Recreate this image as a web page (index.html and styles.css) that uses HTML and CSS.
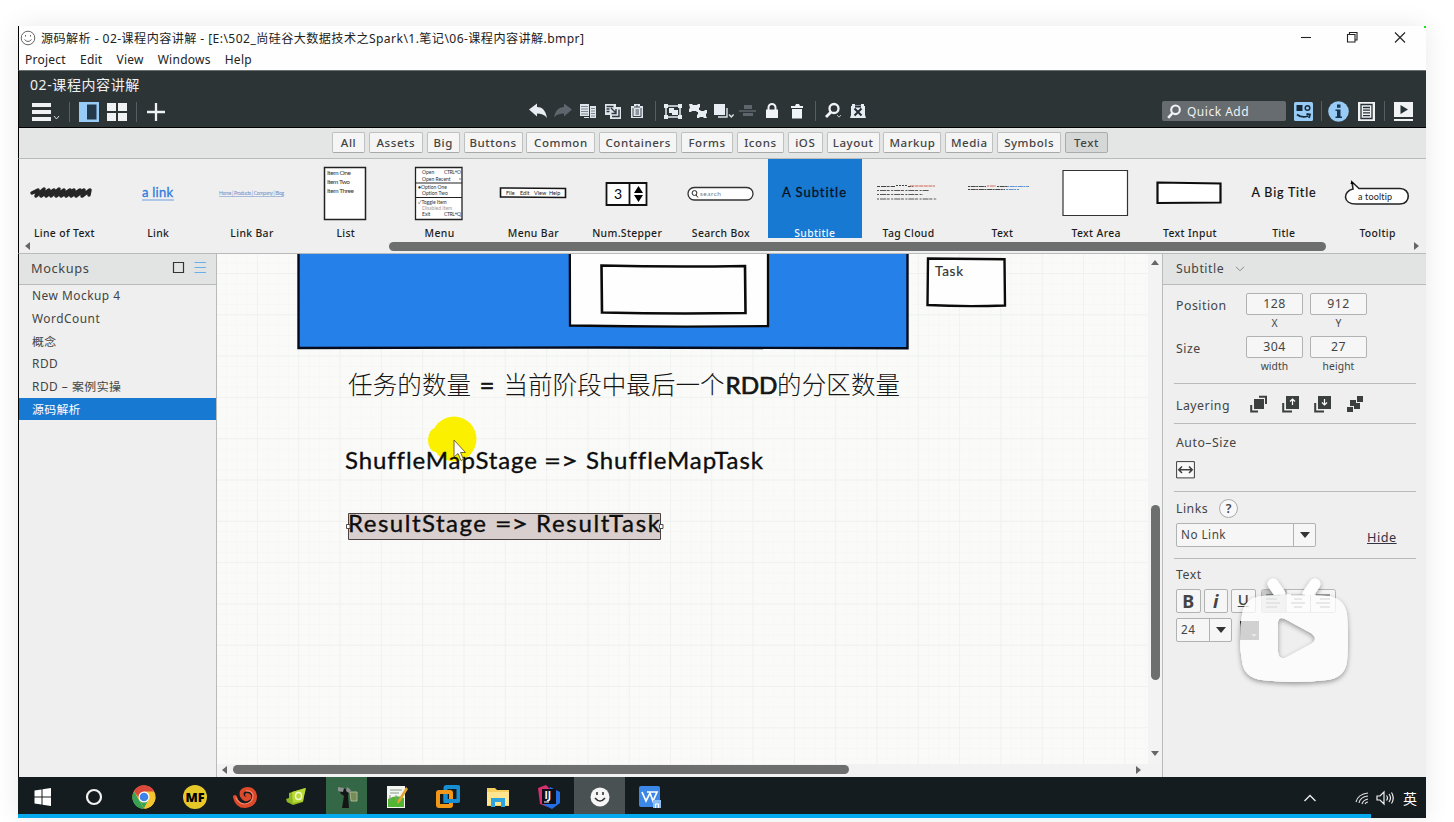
FILE: index.html
```html
<!DOCTYPE html>
<html lang="zh-CN">
<head>
<meta charset="utf-8">
<title>源码解析</title>
<link rel="stylesheet" href="styles.css">
</head>
<body>
<div class="window">
  <header class="titlebar">
    <svg class="app-icon" width="16" height="16" viewBox="0 0 16 16" fill="none" stroke="#666" stroke-width="1"><circle cx="8" cy="8" r="6.800"/><path d="M4.500 9.500q3.500 4 7 0M5.500 5v1.600M10.500 5v1.600"/></svg>
    <span class="caption">源码解析 - 02-课程内容讲解 - [E:\502_尚硅谷大数据技术之Spark\1.笔记\06-课程内容讲解.bmpr]</span>
    <svg class="win-controls" width="108" height="14" viewBox="0 0 108 14" fill="none" stroke="#222" stroke-width="1.100"><path d="M2 7.500h10"/><path d="M48.500 4.500h7.500v7.500h-7.500zM50.500 4.500v-2h7.500v7.500h-2"/><path d="M96 2.500l10 10M106 2.500l-10 10"/></svg>
    <i class="corner"></i>
  </header>
  <nav class="menubar"><span>Project</span><span>Edit</span><span>View</span><span>Windows</span><span>Help</span></nav>

  <section class="toolbar">
    <div class="doc-name">02-课程内容讲解</div>
    <div class="tools">
      <div class="tools-left">
        <svg width="30" height="20" viewBox="0 0 30 20"><path fill="#f0f2f4" d="M0 1h19v4H0zM0 8h19v4H0zM0 15h19v4H0z"/><path d="M22 14l2.500 3 2.500-3" fill="none" stroke="#d8dcdf"/></svg>
        <i class="sep"></i>
        <svg width="20" height="20" viewBox="0 0 20 20"><path fill="#98cbf5" d="M0 0h20v20H0z"/><path fill="#243949" d="M8 2.500h9.500v15H8z"/></svg>
        <svg width="20" height="20" viewBox="0 0 20 20"><path fill="#f0f2f4" d="M0 1h9v8H0zM11 1h9v8h-9zM0 11h9v8H0zM11 11h9v8h-9z"/></svg>
        <i class="sep"></i>
        <svg width="20" height="20" viewBox="0 0 20 20"><path d="M10 1v18M1 10h18" stroke="#f0f2f4" stroke-width="2.300"/></svg>
      </div>
      <div class="tools-mid">
        <svg viewBox="0 0 24 20"><path fill="#e8ecf3" d="M3 8.500L11 2.500v3.600c5 0 8.500 3 10 10.900C18.500 13.500 15 12.500 11 12.500v3z"/></svg>
        <svg viewBox="0 0 24 20"><path fill="#5d666c" d="M21 8.500L13 2.500v3.600C8 6.100 4.500 9.500 3 16.500c2.500-3 5.500-4 10-4v3z"/></svg>
        <svg viewBox="0 0 24 20"><g fill="#e1e6ed"><path d="M4 3h9v12H4zM14 5h6v12h-6zM8 16h5v1H8z"/></g><path d="M5 5.500h7M5 8h7M5 10.500h7M5 13h7M15 7.500h4M15 10h4M15 12.500h4M15 15h4" stroke="#7d868e"/></svg>
        <svg viewBox="0 0 24 20"><path fill="#e1e6ed" d="M4 3h11v3h5v12H9v-4H4z"/><path d="M5.500 5.500h7M5.500 8h3M5.500 10.500h3M18 8.500v7h-7M10 7l5 5M15 8v4.500h-4.500" fill="none" stroke="#313a42" stroke-width="1.400"/></svg>
        <svg viewBox="0 0 24 20"><path fill="#e1e6ed" d="M6 5h3V3h6v2h3v12H6z"/><path d="M8 7v8.500h8V7M9 6h6M10.500 9h3.500M10.500 11h3.500M10.500 13h3.500M12 4v2" fill="none" stroke="#3b444c"/></svg>
        <i class="sep"></i>
        <svg viewBox="0 0 24 20"><path d="M5 5h14v11H5z" fill="none" stroke="#e8ecf3" stroke-width="1.500"/><path fill="#e8ecf3" d="M3 3h4v4H3zM17 3h4v4h-4zM3 14h4v4H3zM17 14h4v4h-4zM8 7h5v5H8zM11 9h6v5h-6z"/></svg>
        <svg viewBox="0 0 24 20"><path fill="#e8ecf3" d="M3 3h3l1 1h4l1-1h2v3l-1 1v2l1 2h-3l-1-1H6l-1 1H3V8l1-1zM12 9h2l1 1h3l1-1h2v3l-1 1v2l1 2h-3l-1-1h-3l-1 1h-2v-3l1-1v-2z"/></svg>
        <svg viewBox="0 0 24 20"><path fill="#e8ecf3" d="M3 3h11v11H3z"/><path d="M7 16h9V7M18 13.500l2.300 2.500 2.300-2.500" fill="none" stroke="#dfe4e9" stroke-width="1.400"/></svg>
        <svg viewBox="0 0 24 20"><path fill="#5d666c" d="M8 4h8v4H8zM7 12h10v3H7z"/><path d="M3 10h17" stroke="#5d666c" stroke-width="1.500"/></svg>
        <svg viewBox="0 0 24 20"><path fill="#f0f3f7" d="M6 8.500h12v8.500H6z"/><path d="M8.500 10V6.500a3.500 3.500 0 0 1 7 0V10" fill="none" stroke="#f0f3f7" stroke-width="2"/></svg>
        <svg viewBox="0 0 24 20"><path fill="#f0f3f7" d="M6 5h4l1-2h3l1 2h3v2H6zM7 8h10v9.500H7z"/></svg>
        <i class="sep"></i>
        <svg viewBox="0 0 24 20"><circle cx="13" cy="7.500" r="4.500" fill="none" stroke="#f0f3f7" stroke-width="2.300"/><path d="M10 11l-5 5" stroke="#f0f3f7" stroke-width="2.800"/><path d="M16 14l2 2.200 2-2.200" fill="none" stroke="#b9c0c5"/></svg>
        <svg viewBox="0 0 24 20"><path fill="#e8ecf3" d="M6 3h3v1h6V3h3v2h1v9l1 3H4l1-3V5h1z"/><path d="M8.500 7.500l7 7M15.500 7.500l-7 7M9 5.500h6" stroke="#242d33" stroke-width="2"/></svg>
      </div>
      <div class="tools-right">
        <div class="quick-add"><svg width="14" height="15" viewBox="0 0 14 15"><circle cx="8.500" cy="5.800" r="4.300" fill="none" stroke="#f0f2f4" stroke-width="2.100"/><path d="M5.500 9L1.200 13.800" stroke="#f0f2f4" stroke-width="2.600"/></svg><span>Quick Add</span></div>
        <svg width="19" height="19" viewBox="0 0 19 19"><rect width="19" height="19" rx="1.500" fill="#98cbf5"/><path fill="#16293a" d="M2.500 3h6v6h-6z"/><circle cx="13.500" cy="6" r="2.300" fill="none" stroke="#16293a" stroke-width="1.500"/><path d="M3 12.500q5 4 11 1.500M12.500 12l3.500.5-1 3.500" fill="none" stroke="#16293a" stroke-width="1.800"/></svg>
        <i class="sep"></i>
        <svg width="21" height="21" viewBox="0 0 21 21"><circle cx="10.500" cy="10.500" r="10.300" fill="#98cbf5"/><path fill="#173450" d="M9 3.500h3.500v3.200H9zM7.500 8.500h5v7H14V17H7.500v-1.500H9V10H7.500z"/></svg>
        <svg width="17" height="19" viewBox="0 0 17 19"><path fill="#f0f2f4" d="M0 0h17v19H0z"/><path d="M3 2.500h11v14H3zM5 5.500h7M5 8.200h7M5 10.900h7M5 13.600h7" fill="none" stroke="#273238" stroke-width="1.300"/></svg>
        <i class="sep"></i>
        <svg width="19" height="19" viewBox="0 0 19 19"><path fill="#f0f2f4" d="M0 0h19v15H0zM0 17h19v2H0z"/><path fill="#273238" d="M6.500 3l7.500 4.500-7.500 4.500z"/></svg>
      </div>
    </div>
  </section>

  <section class="filters">
    <b>All</b><b>Assets</b><b>Big</b><b>Buttons</b><b>Common</b><b>Containers</b><b>Forms</b><b>Icons</b><b>iOS</b><b>Layout</b><b>Markup</b><b>Media</b><b>Symbols</b><b class="on">Text</b>
  </section>

  <section class="library">
    <div class="shelf">
      <figure><svg viewBox="0 0 94 68"><path d="M14 34l6-3-2 6 8-7-3 7 8-6-3 6 8-6-3 6 8-7-3 7 8-6-3 6 9-6-4 6 8-6-3 6 9-6-4 6 8-6-2 6 8-6-1 5" fill="none" stroke="#262626" stroke-width="3.500" stroke-linejoin="round" stroke-linecap="round"/></svg><figcaption>Line of Text</figcaption></figure>
      <figure><svg viewBox="0 0 94 68"><text x="31" y="38" class="sk" font-size="13" fill="#2f7ae0" stroke="#2f7ae0" stroke-width=".3" textLength="31">a link</text><path d="M31 41h32" stroke="#6f9fdf"/></svg><figcaption>Link</figcaption></figure>
      <figure><svg viewBox="0 0 94 68"><text x="14" y="36" class="sk" font-size="5" fill="#6b8ecb" textLength="65" text-decoration="underline">Home | Products | Company | Blog</text></svg><figcaption>Link Bar</figcaption></figure>
      <figure><svg viewBox="0 0 94 68"><path d="M25.500 8.500h41v52h-41z" fill="#fff" stroke="#222" stroke-width="1.500"/><g class="sk" font-size="6.500" fill="#333"><text x="28" y="16" textLength="24">Item One</text><text x="28" y="25" textLength="23">Item Two</text><text x="28" y="33.500" textLength="27">Item Three</text></g></svg><figcaption>List</figcaption></figure>
      <figure><svg viewBox="0 0 94 68"><path d="M22.500 8.500h46.500v52H22.500z" fill="#fff" stroke="#222" stroke-width="1.300"/><path d="M23 24h46M23 38.500h46" stroke="#222"/><g class="sk" font-size="5" fill="#333"><text x="29" y="15">Open</text><text x="51" y="15" textLength="17">CTRL+O</text><text x="29" y="21.500">Open Recent</text><text x="65.500" y="21.500">&gt;</text><text x="25" y="29.500">●Option One</text><text x="29" y="36">Option Two</text><text x="25" y="44.500">✓Toggle Item</text><text x="29" y="51" fill="#999">Disabled Item</text><text x="29" y="57">Exit</text><text x="51" y="57" textLength="17">CTRL+Q</text></g></svg><figcaption>Menu</figcaption></figure>
      <figure><svg viewBox="0 0 94 68"><path d="M14.500 29l65 .5v9l-65-.5z" fill="#fff" stroke="#161616" stroke-width="1.600"/><g class="sk" font-size="5.500" fill="#222"><text x="20" y="36">File</text><text x="34" y="36">Edit</text><text x="48" y="36">View</text><text x="63" y="36">Help</text></g></svg><figcaption>Menu Bar</figcaption></figure>
      <figure><svg viewBox="0 0 94 68"><path d="M26.500 24h40v22h-40zM49.500 24v22" fill="#fff" stroke="#111" stroke-width="1.800"/><text x="34" y="39.500" class="sk" font-size="14">3</text><path d="M54 34l4.500-7 4.500 7zM54 36l4.500 7 4.500-7z"/></svg><figcaption>Num.Stepper</figcaption></figure>
      <figure><svg viewBox="0 0 94 68"><rect x="14" y="28.500" width="65" height="12.500" rx="6.200" fill="#fff" stroke="#333" stroke-width="1.300"/><circle cx="20.500" cy="34" r="2.400" fill="none" stroke="#222"/><path d="M22 36l2 2.500" stroke="#222"/><text x="26" y="37" class="sk" font-size="6.500" fill="#777" textLength="21">search</text></svg><figcaption>Search Box</figcaption></figure>
      <figure class="picked"><svg viewBox="0 0 94 68"><text x="14" y="37.500" class="sk" font-size="13" fill="#07121f" stroke="#07121f" stroke-width=".3" textLength="64">A Subtitle</text></svg><figcaption>Subtitle</figcaption></figure>
      <figure><svg viewBox="0 0 94 68" fill="none" stroke="#444" stroke-width="1.100"><path d="M15 27.500h18M46 27.500h5" stroke-dasharray="3 1 5 .6"/><path d="M34 26.500h11" stroke-dasharray="2 1"/><path d="M48 27h25" stroke="#d2604f" stroke-dasharray="4 .6"/><path d="M15 31.500h52M15 35.500h46M15 40h60" stroke-dasharray="2 1 6 .7 3 1.500" stroke-width=".9"/></svg><figcaption>Tag Cloud</figcaption></figure>
      <figure><svg viewBox="0 0 94 68" fill="none" stroke-width="1.100" stroke-dasharray="2 .7 5 .5"><path d="M13 27.500h18M42 27.500h10M13 30.500h37" stroke="#444"/><path d="M32 27h9" stroke="#cc6a60"/><path d="M52 27.500h22M51 30.500h13" stroke="#5e93d6"/></svg><figcaption>Text</figcaption></figure>
      <figure><svg viewBox="0 0 94 68"><path d="M14 11.500h64.500v45H14z" fill="#fff" stroke="#333" stroke-width="1.200"/></svg><figcaption>Text Area</figcaption></figure>
      <figure><svg viewBox="0 0 94 68"><path d="M14.500 23.500l63 1v19l-63 .5z" fill="#fff" stroke="#0c0c0c" stroke-width="2.200"/></svg><figcaption>Text Input</figcaption></figure>
      <figure><svg viewBox="0 0 94 68"><text x="14.500" y="37.500" class="sk" font-size="12.500" fill="#111" stroke="#111" stroke-width=".2" textLength="64">A Big Title</text></svg><figcaption>Title</figcaption></figure>
      <figure><svg viewBox="0 0 94 68"><path d="M28 29.500L21 23l1 7C12 32 11 45 25 45h44c11 0 11-15.500 0-15.500z" fill="#fff" stroke="#222" stroke-width="1.600"/><path d="M19.500 25l1-3 3 3z"/><text x="27" y="40.500" class="sk" font-size="9" fill="#222" textLength="34">a tooltip</text></svg><figcaption>Tooltip</figcaption></figure>
    </div>
    <div class="hscroll"><i class="tri left"></i><i class="thumb"></i><i class="tri right"></i></div>
  </section>

  <main class="workspace">
    <aside class="mockups">
      <div class="panel-head"><span>Mockups</span><svg width="36" height="16" viewBox="0 0 36 16" fill="none"><path d="M3.500 2.500h10v10h-10z" stroke="#333" stroke-width="1.200"/><path d="M24.500 2.500h11.500M24.500 7.500h11.500M24.500 12.500h11.500" stroke="#67b0ea" stroke-width="1.200"/></svg></div>
      <ul><li>New Mockup 4</li><li>WordCount</li><li class="zh">概念</li><li>RDD</li><li>RDD – 案例实操</li><li class="on zh">源码解析</li></ul>
    </aside>

    <section class="canvas">
      <svg class="board" width="931" height="510" viewBox="217 254 931 510">
        <defs>
          <pattern id="minor" width="10.325" height="10.325" patternUnits="userSpaceOnUse" x="257" y="273"><path d="M0 .5h10.330M.5 0v10.330" stroke="#f7f8f6" fill="none"/></pattern>
          <pattern id="major" width="41.300" height="41.300" patternUnits="userSpaceOnUse" x="257" y="273"><path d="M0 .5h41.300M.5 0v41.300" stroke="#f0f2f0" fill="none"/></pattern>
        </defs>
        <path d="M217 254h931v510H217z" fill="#fafbf9"/>
        <path d="M217 254h931v510H217z" fill="url(#minor)"/>
        <path d="M217 254h931v510H217z" fill="url(#major)"/>
        <path d="M298.500 240v108l300-.5 309 .8V240" fill="#2680ea" stroke="#050b1c" stroke-width="2.400"/>
        <path d="M569.800 240l.2 85.500q100 1.800 198 .5V240" fill="#fefefe" stroke="#090909" stroke-width="2.300"/>
        <path d="M601.500 265.500q70 1.800 143.500.5l.5 47q-73 1.200-143.500-.5z" fill="#fefefe" stroke="#0b0b0b" stroke-width="2.600"/>
        <path d="M928 258.500l76.500.8 .5 46.200q-40 1.500-77.500-.5z" fill="#fefefe" stroke="#0b0b0b" stroke-width="2.400"/>
        <text x="935" y="275.500" class="sk" font-size="13.500" fill="#333" stroke="#333" stroke-width=".2" textLength="28">Task</text>
        <g class="note" font-size="24.500" fill="#151515">
          <text x="348" y="394" textLength="123">任务的数量</text>
          <text x="479.500" y="395" class="sk" font-size="26" stroke="#151515" stroke-width=".5">=</text>
          <text x="503.500" y="394" textLength="221">当前阶段中最后一个</text>
          <text x="725.500" y="394" class="sk" font-size="24" textLength="52" lengthAdjust="spacingAndGlyphs" stroke="#151515" stroke-width=".7">RDD</text>
          <text x="777" y="394" textLength="123">的分区数量</text>
        </g>
        <circle cx="454" cy="439" r="22.500" fill="#fbf000"/>
        <ellipse cx="436" cy="440" rx="8" ry="12" fill="#fbf000"/>
        <path d="M348.500 513.500h312v26h-312z" fill="#d8cfce" stroke="#4a4341"/>
        <g class="sk" font-size="24" fill="#0d0d0d" stroke="#0d0d0d" stroke-width=".35">
          <text x="345" y="468.500" textLength="192">ShuffleMapStage</text>
          <text x="544" y="468.500" textLength="34" lengthAdjust="spacingAndGlyphs">=&gt;</text>
          <text x="586" y="468.500" textLength="177">ShuffleMapTask</text>
          <text x="348" y="532" textLength="138">ResultStage</text>
          <text x="495" y="532" textLength="33" lengthAdjust="spacingAndGlyphs">=&gt;</text>
          <text x="536" y="532" textLength="124">ResultTask</text>
        </g>
        <path d="M346.500 524.500h3.500v4h-3.500zM659.500 524.500h3.500v4h-3.500z" fill="#fff" stroke="#403a38" stroke-width=".9"/>
        <path d="M454 440v17l4-3.500 3 7 2.500-1.200-3-6.800h5z" fill="#fff" stroke="#6b5a18" stroke-width=".9"/>
      </svg>
      <div class="vscroll"><i class="tri up"></i><i class="thumb"></i><i class="tri down"></i></div>
      <div class="hscroll"><i class="tri left"></i><i class="thumb"></i><i class="tri right"></i></div>
    </section>

    <aside class="inspector">
      <div class="panel-head"><span>Subtitle</span><svg width="10" height="6" viewBox="0 0 10 6"><path d="M1 .8l4 4 4-4" fill="none" stroke="#888"/></svg></div>
      <div class="group metrics">
        <label>Position</label><div class="field">128<small>X</small></div><div class="field">912<small>Y</small></div>
        <label>Size</label><div class="field">304<small>width</small></div><div class="field">27<small>height</small></div>
      </div>
      <div class="group layering">
        <label>Layering</label>
        <svg viewBox="0 0 18 18" fill="#3b3f3d"><path d="M4 4h10v10H4z"/><path d="M9 1.800h7V9M1.200 10v6.500H8" fill="none" stroke="#3b3f3d" stroke-width="2"/></svg>
        <svg viewBox="0 0 18 18" fill="#3b3f3d"><path d="M4 1h13v13H4z"/><path d="M1.200 8v8.500H10" fill="none" stroke="#3b3f3d" stroke-width="2"/><path d="M10.500 10V4.500M8 6.500l2.500-2.500L13 6.500" fill="none" stroke="#fff" stroke-width="1.200"/></svg>
        <svg viewBox="0 0 18 18" fill="#3b3f3d"><path d="M4 1h13v13H4z"/><path d="M1.200 8v8.500H10" fill="none" stroke="#3b3f3d" stroke-width="2"/><path d="M10.500 4v5.500M8 7.500l2.500 2.500L13 7.500" fill="none" stroke="#fff" stroke-width="1.200"/></svg>
        <svg viewBox="0 0 18 18" fill="#3b3f3d"><path d="M11 1h6v6h-6zM4 5h6v3h4v6H8v-3H4zM1 12h6v5H1z"/></svg>
      </div>
      <div class="group autosize">
        <label>Auto–Size</label>
        <svg width="19" height="18" viewBox="0 0 19 18" fill="none" stroke="#3d3d3d"><path d="M.6.6h17.800v16.300H.6z" fill="#f8f9f8"/><path d="M3 8.700h13M6 5.500L2.800 8.700 6 12M13 5.500l3.200 3.200L13 12" stroke-width="1.500"/></svg>
      </div>
      <div class="group links">
        <label>Links <em>?</em></label>
        <div class="line"><div class="select wide"><span>No Link</span><i></i></div><a>Hide</a></div>
      </div>
      <div class="group typo">
        <label>Text</label>
        <div class="line styles"><b class="key">B</b><b class="key it">i</b><b class="key un">U</b>
          <svg width="75" height="24" viewBox="0 0 75 24" fill="none"><rect x=".5" y=".5" width="74" height="23" rx="2" fill="#f4f5f4" stroke="#b3b6b4"/><path d="M1 1h24v22H1z" fill="#c9cbca"/><path d="M25 1v22M49.500 1v22" stroke="#a3a6a4"/><path d="M5 6h14M5 10h11M5 14h14M5 18h11M30 6h14M33 10h8M30 14h14M33 18h8M55 6h14M59 10h10M55 14h14M59 18h10" stroke="#444"/></svg></div>
        <div class="line"><div class="select"><span>24</span><i></i></div><svg class="swatch" width="19" height="19" viewBox="0 0 19 19"><path fill="#333" d="M0 0h19v19H0z"/><path fill="#999" d="M11 13h6l-3 3z"/></svg></div>
      </div>
      <svg class="watermark" width="130" height="124" viewBox="0 0 130 124">
        <defs>
          <filter id="glow" x="-20%" y="-20%" width="140%" height="140%"><feDropShadow dx="0" dy="2" stdDeviation="2.500" flood-color="#000" flood-opacity=".38"/></filter>
          <path id="tv" clip-rule="evenodd" fill-rule="evenodd" d="M32 26q32-3 65 0 18 2 20 19 2 24 0 46-2 17-20 19-33 4-65 0Q14 108 12 91 8 69 12 45 14 28 32 26zM48 52v30q1 9 9 5l24-13q8-5 0-11L57 50q-8-5-9 2z"/>
          <mask id="outside"><path d="M0 0h130v124H0z" fill="#fff"/><use href="#tv" fill="#000"/></mask>
        </defs>
        <g mask="url(#outside)"><g filter="url(#glow)"><path d="M43 14l7 10M85 14l-7 10" stroke="#fefefe" stroke-width="11" stroke-linecap="round"/><use href="#tv" fill="#fefefe"/></g></g>
        <use href="#tv" fill="#fefefe" fill-opacity=".78"/>
      </svg>
    </aside>
  </main>

  <footer class="taskbar">
    <div class="apps">
      <span><svg viewBox="0 0 24 24" fill="#fff"><path d="M3.500 5.500l7-1v7h-7zM11.500 4.300L20 3v8.500h-8.500zM3.500 12.500h7v7l-7-1zM11.500 12.500H20V21l-8.500-1.300z"/></svg></span>
      <span><svg viewBox="0 0 24 24"><circle cx="12" cy="12" r="7" fill="none" stroke="#f1f1f1" stroke-width="2.200"/></svg></span>
      <span><svg viewBox="0 0 24 24"><circle cx="12" cy="12" r="11.500" fill="#f3c531"/><path d="M2 6.200l6 10.500 4 7A11.500 11.500 0 0 1 2 6.200z" fill="#37a155"/><path d="M8 16l4 7.500L17 14z" fill="#37a155"/><path d="M12 23.500L18 12h5.500A11.500 11.500 0 0 1 12 23.500z" fill="#f3c531"/><path d="M2 6.200A11.500 11.500 0 0 1 22.200 6.500H12L7 13z" fill="#dc493c"/><circle cx="12" cy="12" r="5.500" fill="#fff"/><circle cx="12" cy="12" r="4.300" fill="#3f82e8"/></svg></span>
      <span><svg viewBox="0 0 24 24"><circle cx="12" cy="12" r="12" fill="#e6c929"/><text x="2.500" y="17" font-size="13" font-weight="800" class="ui" textLength="19" lengthAdjust="spacingAndGlyphs">MF</text></svg></span>
      <span><svg viewBox="0 0 24 24" fill="none" stroke-linecap="round"><path d="M2 12q2 9 10 9 10-1 10-10-1-7-8-7-7 1-5 7 3 5 7 2 1-3-2-3" stroke="#dc4a2b" stroke-width="4"/><path d="M3 13q3 6 9 6 8-1 8-9-2-5-7-4" stroke="#ff8566" stroke-width="1.200"/></svg></span>
      <span><svg viewBox="0 0 24 24"><path d="M5 8l16-5-2 14-10 3-6-3-1-3 3-1z" fill="#8fb922"/><path d="M8 7l14-4-3 13-10 2z" fill="#b8d936"/><ellipse cx="14.500" cy="11" rx="3" ry="3.500" fill="none" stroke="#f0f8ce" stroke-width="1.500"/></svg></span>
      <span class="green"><svg viewBox="0 0 24 24"><path d="M8 3l6 3-1 5 1 12H7l2-12-4-3z" fill="#131615"/><path d="M3 2l6 1-1 4-5-1zM12 2l4 3-2 3-3-2z" fill="#8d918f"/><path d="M15 7h7v9h-6z" fill="#738c58" stroke="#a9b68c"/></svg></span>
      <span><svg viewBox="0 0 24 24"><path d="M2 1h18v22H2z" fill="#f4f6f0"/><path d="M3 14q8-5 16-1v9H3z" fill="#54b534"/><path d="M5 5h12M5 8h9M5 10v6M11 10v6" stroke="#899c91"/><path d="M21 2l-8 13-1 4 3-2 8-13z" fill="#e3a633"/></svg></span>
      <span><svg viewBox="0 0 24 24" fill="none" stroke-width="4"><rect x="9.500" y="2" width="13" height="14" rx="1" stroke="#168ed1"/><rect x="2" y="7" width="13" height="14" rx="1" stroke="#f39718"/><path d="M9.500 9v7h8" stroke="#168ed1"/></svg></span>
      <span><svg viewBox="0 0 24 24"><path d="M1 3h8l2 2h12v16H1z" fill="#f5cf60"/><path d="M1 7h22v13H1z" fill="#ffe590"/><path d="M5 13h14v9h-4v-5H9v5H5z" fill="#2da3df"/></svg></span>
      <span><svg viewBox="0 0 24 24"><path d="M1 3l8-3 6 6-4 16-8-3z" fill="#d72f70"/><path d="M13 2l10 5v11l-8 6-8-4z" fill="#246ee5"/><path d="M5 4h14v15H5z" fill="#101018"/><text x="7.500" y="13.500" class="ui" font-size="10" font-weight="700" fill="#fff">IJ</text><path d="M7 17h5" stroke="#fff"/></svg></span>
      <span class="active"><svg viewBox="0 0 24 24"><circle cx="12" cy="12" r="9.500" fill="#f5f5f5"/><path d="M7 13q5 6 10 0M9 7v3M15 7v3" fill="none" stroke="#333" stroke-width="1.600"/></svg></span>
      <span><svg viewBox="0 0 24 24"><rect x="1" y="1" width="21" height="21" rx="2" fill="#3c88e8"/><path d="M4 7l4 9 4-8 3 8 4-9H9" fill="none" stroke="#fff" stroke-width="1.700"/><path d="M15 15h8v8h-8z" fill="#8ebef6"/><path d="M17.500 23v-4h3v4" fill="none" stroke="#fff"/></svg></span>
    </div>
    <div class="tray">
      <svg width="14" height="10" viewBox="0 0 14 10"><path d="M1.500 8L7 2.500 12.500 8" fill="none" stroke="#eee" stroke-width="1.300"/></svg>
      <svg width="16" height="16" viewBox="0 0 16 16" fill="none" stroke="#ddd" stroke-width="1.200"><path d="M2 12Q4 4 14 3M5 13q1-6 9-7M8 14q1-4 6-5M11 14q1-2 3-2"/></svg>
      <svg width="18" height="16" viewBox="0 0 18 16" fill="none" stroke="#eee" stroke-width="1.200"><path d="M1 6h3l4-4v12l-4-4H1zM10.500 5.500q2 2.500 0 5M13 4q3 4 0 8M15.500 2.500q3.500 5.500 0 11"/></svg>
      <span>英</span>
    </div>
  </footer>
  <div class="progress"><i></i></div>
</div>
</body>
</html>
```
FILE: styles.css
```css
* { box-sizing: border-box; }
body { margin: 0; width: 1454px; height: 822px; overflow: hidden; padding: 26px 28px 4px 18px; background: #fff; font-family: "Noto Sans", "Noto Sans CJK SC", sans-serif; font-size: 12px; color: #444; }
svg { display: block; flex: none; }
i { font-style: normal; }
.sk { font-family: Lato, "Noto Sans CJK SC", sans-serif; font-weight: 400; font-variant-ligatures: none; }
.ui { font-family: "Open Sans", sans-serif; }
.note { font-family: "Noto Sans CJK SC", sans-serif; font-weight: 300; }
.window { width: 1408px; height: 792px; display: flex; flex-direction: column; background: #fefefe; box-shadow: 0 0 24px rgba(0,0,0,.09); }

.titlebar { height: 23px; display: flex; align-items: center; padding-left: 1px; color: #222; border-left: 1px solid #000; }
.caption { margin: 2px 0 0 5px; font-size: 12.100px; line-height: 22px; letter-spacing: .43px; white-space: pre; }
.win-controls { margin: -2px 17px 0 auto; }
.corner { width: 2px; height: 2px; background: #1de01d; align-self: flex-start; }
.menubar { height: 21px; display: flex; gap: 14px; padding-left: 6px; line-height: 22px; letter-spacing: .25px; color: #222; border-left: 1px solid #000; }

.toolbar { height: 58px; background: #2d3436; border-top: 1px solid #687070; border-bottom: 1px solid #000; border-left: 1px solid #000; }
.doc-name { height: 28px; padding-left: 11px; line-height: 28px; font-size: 14px; letter-spacing: .6px; color: #f0f0f0; }
.tools { display: grid; grid-template-columns: 507.200px 1fr 264px; height: 25px; align-items: center; }
.tools-left { display: flex; align-items: center; padding-left: 13px; }
.tools-left svg:nth-of-type(2) { margin-left: 9px; }
.tools-left svg:nth-of-type(3) { margin: 0 9px 0 8px; }
.tools-left svg:nth-of-type(4) { margin-left: 9px; }
.tools-left .sep:nth-of-type(1) { margin-left: 7px; }
.sep { width: 1px; height: 20px; background: #555e62; }
.tools-mid { display: flex; align-items: center; margin-top: -1px; }
.tools-mid svg { width: 24px; height: 20px; margin-right: .8px; }
.tools-mid .sep { margin: 0 5px; }
.tools-right { display: flex; align-items: center; margin-left: -1px; margin-top: -1px; }
.quick-add { width: 124px; height: 20px; border-radius: 2px; background: #666c70; display: flex; align-items: center; gap: 6px; padding-left: 5px; color: #f0f1f2; font-size: 12px; letter-spacing: .5px; margin-right: 8px; margin-left: 1px; }
.quick-add + svg { margin-right: 8px; }
.tools-right .sep + svg { margin-left: 6px; }
.tools-right .sep + svg + svg { margin: 0 9px; }
.tools-right .sep:nth-of-type(2) + svg { margin-left: 9px; }

.filters { height: 31px; background: #e4e5e5; border-bottom: 1px solid #b9bbba; border-left: 1px solid #000; display: grid; grid-template-columns: 33px 54px 33px 59px 69px 78px 52px 47px 35px 53px 58px 48px 64px 43px; column-gap: 3.850px; padding: 4px 0 0 313px; justify-content: start; align-items: start; }
.filters b { height: 21px; border: 1px solid #bfc1c0; border-bottom-color: #a7a9a8; border-radius: 2px; background: #f4f5f4; text-align: center; font-size: 11.500px; font-weight: 500; line-height: 19px; letter-spacing: .55px; white-space: nowrap; }
.filters .on { background: #d6d8d7; border-color: #a9abaa; }

.library { height: 95px; background: #eeefee; border-bottom: 1px solid #b9bbba; border-left: 1px solid #000; }
.shelf { height: 79px; display: flex; margin-left: -1.500px; }
figure { flex: none; width: 93.800px; height: 79px; margin: 0; }
figure svg { width: 94px; height: 68px; margin-bottom: -2px; }
figcaption { text-align: center; font-size: 10.400px; font-weight: 500; line-height: 16px; letter-spacing: .35px; color: #1c1c1c; white-space: nowrap; }
.picked { background: #1779d1; }
.picked figcaption { color: #eef6ff; }
.hscroll { display: flex; align-items: center; }
.library .hscroll { height: 15px; padding: 1px 7px 0 6px; }
.thumb { display: block; background: #6d6f6e; border-radius: 5px; }
.library .thumb { width: 937px; height: 9px; margin: 0 auto 0 359px; }
.tri { display: block; border: 4px solid transparent; width: 0; height: 0; }
.left { border-right: 5px solid #666; border-left: 0; }
.right { border-left: 5px solid #666; border-right: 0; }
.up { border-bottom: 5px solid #666; border-top: 0; }
.down { border-top: 5px solid #666; border-bottom: 0; }

.workspace { height: 523px; display: grid; grid-template-columns: 199px 945px 264px; }
.panel-head { height: 31px; display: flex; align-items: center; background: #e2e4e3; border-bottom: 1px solid #b9bbba; font-size: 12.800px; letter-spacing: .6px; }
.mockups { background: #eeefee; border-right: 1px solid #b9bbba; border-left: 1px solid #000; }
.mockups .panel-head { padding: 0 10px 3px 12px; justify-content: space-between; }
ul { margin: 0; padding: 0; list-style: none; }
li { height: 22.700px; padding-left: 13px; line-height: 20px; font-size: 11.900px; letter-spacing: .5px; }
.zh { letter-spacing: .3px; line-height: 22px; }
li.on { background: #1779d1; color: #fff; height: 22px; line-height: 22px; }

.canvas { display: grid; grid-template-columns: 931px 14px; grid-template-rows: 510px 13px; background: #f1f2f1; }
.vscroll { display: flex; flex-direction: column; align-items: center; padding: 6px 0 8px; background: #f2f3f2; }
.vscroll .thumb { width: 9px; height: 175px; margin: 240px 0 auto; }
.canvas .hscroll { padding: 0 7px 0 5px; height: 11px; }
.canvas .hscroll .thumb { width: 616px; height: 9px; margin: 0 auto 0 6px; }

.inspector { position: relative; background: #eeefee; border-left: 1px solid #b9bbba; letter-spacing: .5px; font-size: 12.300px; }
.inspector .panel-head { padding: 0 0 1px 13px; gap: 11px; font-size: 12.300px; letter-spacing: .5px; }
.group { margin: 0 10px 0 11px; padding-left: 2px; border-bottom: 1px solid #b9bbba; }
label { display: block; }
.metrics { height: 99px; display: grid; grid-template-columns: 70px 64px 64px; grid-template-rows: 43px 43px; padding-top: 8px; }
.metrics label { line-height: 26px; }
.field { width: 57px; height: 22px; line-height: 20px; text-align: center; background: #f5f6f5; border: 1px solid #b0b3b1; border-radius: 2px; }
small { display: block; margin-top: 1px; font-size: 10.300px; letter-spacing: .1px; line-height: 16px; }
.layering { height: 40px; display: flex; align-items: center; padding-top: 3px; }
.layering label { width: 74px; white-space: nowrap; }
.layering svg { width: 18px; height: 18px; margin-right: 14px; margin-top: -2px; }
.autosize { height: 68px; padding-top: 9px; }
.autosize label, .typo label { line-height: 20px; }
.autosize svg { margin-top: 8px; }
.links { height: 67px; padding-top: 7px; }
.links label { display: flex; align-items: center; gap: 11px; height: 19px; }
em { width: 19px; height: 19px; border: 1px solid #aaa; border-radius: 50%; background: #f7f8f7; font-style: normal; font-weight: 600; text-align: center; line-height: 17px; letter-spacing: 0; }
.line { display: flex; align-items: center; }
.links .line { margin-top: 5px; }
.select { display: flex; width: 56px; height: 24px; border: 1px solid #b0b3b1; border-radius: 2px; background: #f5f6f5; line-height: 21px; font-size: 11.700px; padding-left: 4px; }
.select span { flex: 1; }
.select i { width: 22px; border-left: 1px solid #b0b3b1; display: grid; place-items: center; }
.select i::after { content: ""; border: 5px solid transparent; border-top: 6px solid #333; border-bottom: 0; }
.select.wide { width: 140px; }
a { margin: 4px 0 0 51px; text-decoration: underline; font-size: 12.700px; color: #334; }
.typo { border: 0; padding-top: 6px; }
.styles { margin: 4px 0 5px; gap: 3px; }
.key { width: 24.500px; height: 24px; border: 1px solid #b0b3b1; border-radius: 2px; background: #f5f6f5; font-size: 18px; text-align: center; line-height: 22px; letter-spacing: 0; }
.it { font-style: italic; }
.un { font-size: 15px; font-weight: 500; text-decoration: underline; line-height: 19px; }
.styles svg { margin-left: 2px; }
.swatch { margin-left: 8px; }
.watermark { position: absolute; left: 66.500px; top: 316px; }

.taskbar { height: 37px; background: #151c1f; display: flex; justify-content: space-between; }
.apps { display: flex; margin-left: -.3px; }
.apps span { flex: none; width: 50.600px; height: 37px; display: grid; place-items: center; padding-top: 3px; }
.apps svg { width: 24px; height: 24px; }
.apps .green { background: linear-gradient(#336746, #336746) center / 41px 100% no-repeat; }
.apps .active { background: #495153; }
.tray { display: flex; align-items: center; color: #fff; font-size: 14px; padding: 4px 9px 0 0; }
.tray svg:nth-child(1) { margin-right: 37px; }
.tray svg:nth-child(2) { margin-right: 6px; }
.tray svg:nth-child(3) { margin-right: 9px; }
.progress { height: 4px; background: #141b1e; }
.progress i { display: block; width: 1353px; height: 4px; background: #06a9ee; }
```
